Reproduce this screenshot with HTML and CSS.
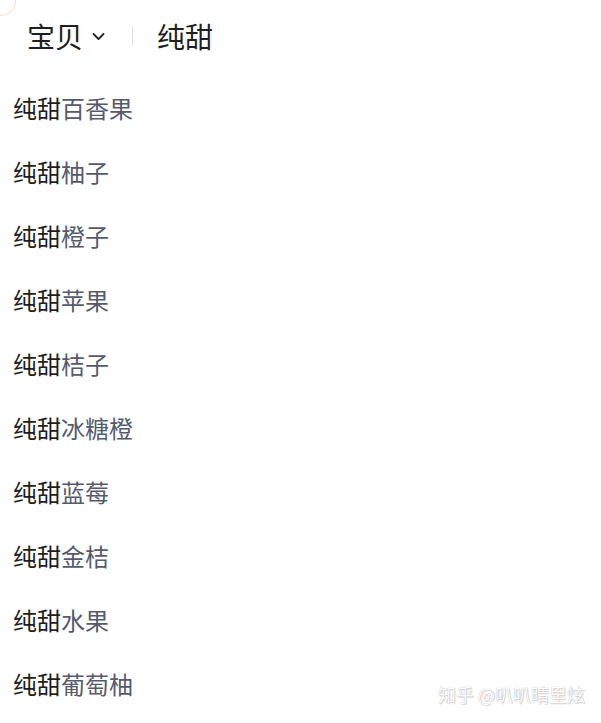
FILE: index.html
```html
<!DOCTYPE html>
<html lang="zh-CN">
<head>
<meta charset="utf-8">
<link rel="stylesheet" href="styles.css">
</head>
<body>
<div class="page">
  <div class="corner"></div>
  <header class="bar">
    <div class="scope">宝贝<svg class="chev" width="13" height="9" viewBox="0 0 13 9"><path d="M1.5 2 L6.5 7 L11.5 2" fill="none" stroke="#222" stroke-width="1.8" stroke-linecap="round" stroke-linejoin="round"/></svg></div>
    <span class="divider"></span>
    <div class="query">纯甜</div>
  </header>
  <ul class="list">
    <li><span class="hit">纯甜</span><span class="rest">百香果</span></li>
    <li><span class="hit">纯甜</span><span class="rest">柚子</span></li>
    <li><span class="hit">纯甜</span><span class="rest">橙子</span></li>
    <li><span class="hit">纯甜</span><span class="rest">苹果</span></li>
    <li><span class="hit">纯甜</span><span class="rest">桔子</span></li>
    <li><span class="hit">纯甜</span><span class="rest">冰糖橙</span></li>
    <li><span class="hit">纯甜</span><span class="rest">蓝莓</span></li>
    <li><span class="hit">纯甜</span><span class="rest">金桔</span></li>
    <li><span class="hit">纯甜</span><span class="rest">水果</span></li>
    <li><span class="hit">纯甜</span><span class="rest">葡萄柚</span></li>
  </ul>
  <div class="watermark">知乎 @叭叭晴里炫</div>
</div>
</body>
</html>
```
FILE: styles.css
```css
html, body {
  margin: 0;
  padding: 0;
  background: #fff;
}
body {
  font-family: "Noto Sans CJK SC", "Noto Sans", sans-serif;
  color: #222;
}
.page {
  position: relative;
  width: 601px;
  height: 723px;
  overflow: hidden;
}
.corner {
  position: absolute;
  left: -14px;
  top: -14px;
  width: 28px;
  height: 28px;
  border-radius: 50%;
  border: 1px solid rgba(230, 150, 90, 0.35);
}
.bar {
  display: flex;
  align-items: center;
  height: 72px;
  padding-bottom: 4px;
  padding-left: 27px;
}
.scope {
  display: flex;
  align-items: center;
  font-size: 28px;
  line-height: 1;
  color: #1f1f1f;
}
.chev {
  margin-left: 9px;
  margin-top: 1px;
}
.divider {
  width: 1px;
  height: 20px;
  background: #e2e2e2;
  margin-left: 27px;
  margin-right: 24px;
}
.query {
  font-size: 28px;
  line-height: 1;
  color: #1f1f1f;
}
.list {
  list-style: none;
  margin: 0;
  padding: 0 0 0 13px;
}
.list li {
  height: 64px;
  display: flex;
  align-items: center;
  font-size: 24px;
  line-height: 1;
}
.hit {
  color: #1e1e1e;
}
.rest {
  color: #555b6e;
}
.watermark {
  position: absolute;
  right: 16px;
  top: 685px;
  font-size: 18px;
  line-height: 1;
  color: #fff;
  text-shadow: 0 0 1px rgba(0,0,0,0.35), 1px 1px 1px rgba(0,0,0,0.15);
}
```
